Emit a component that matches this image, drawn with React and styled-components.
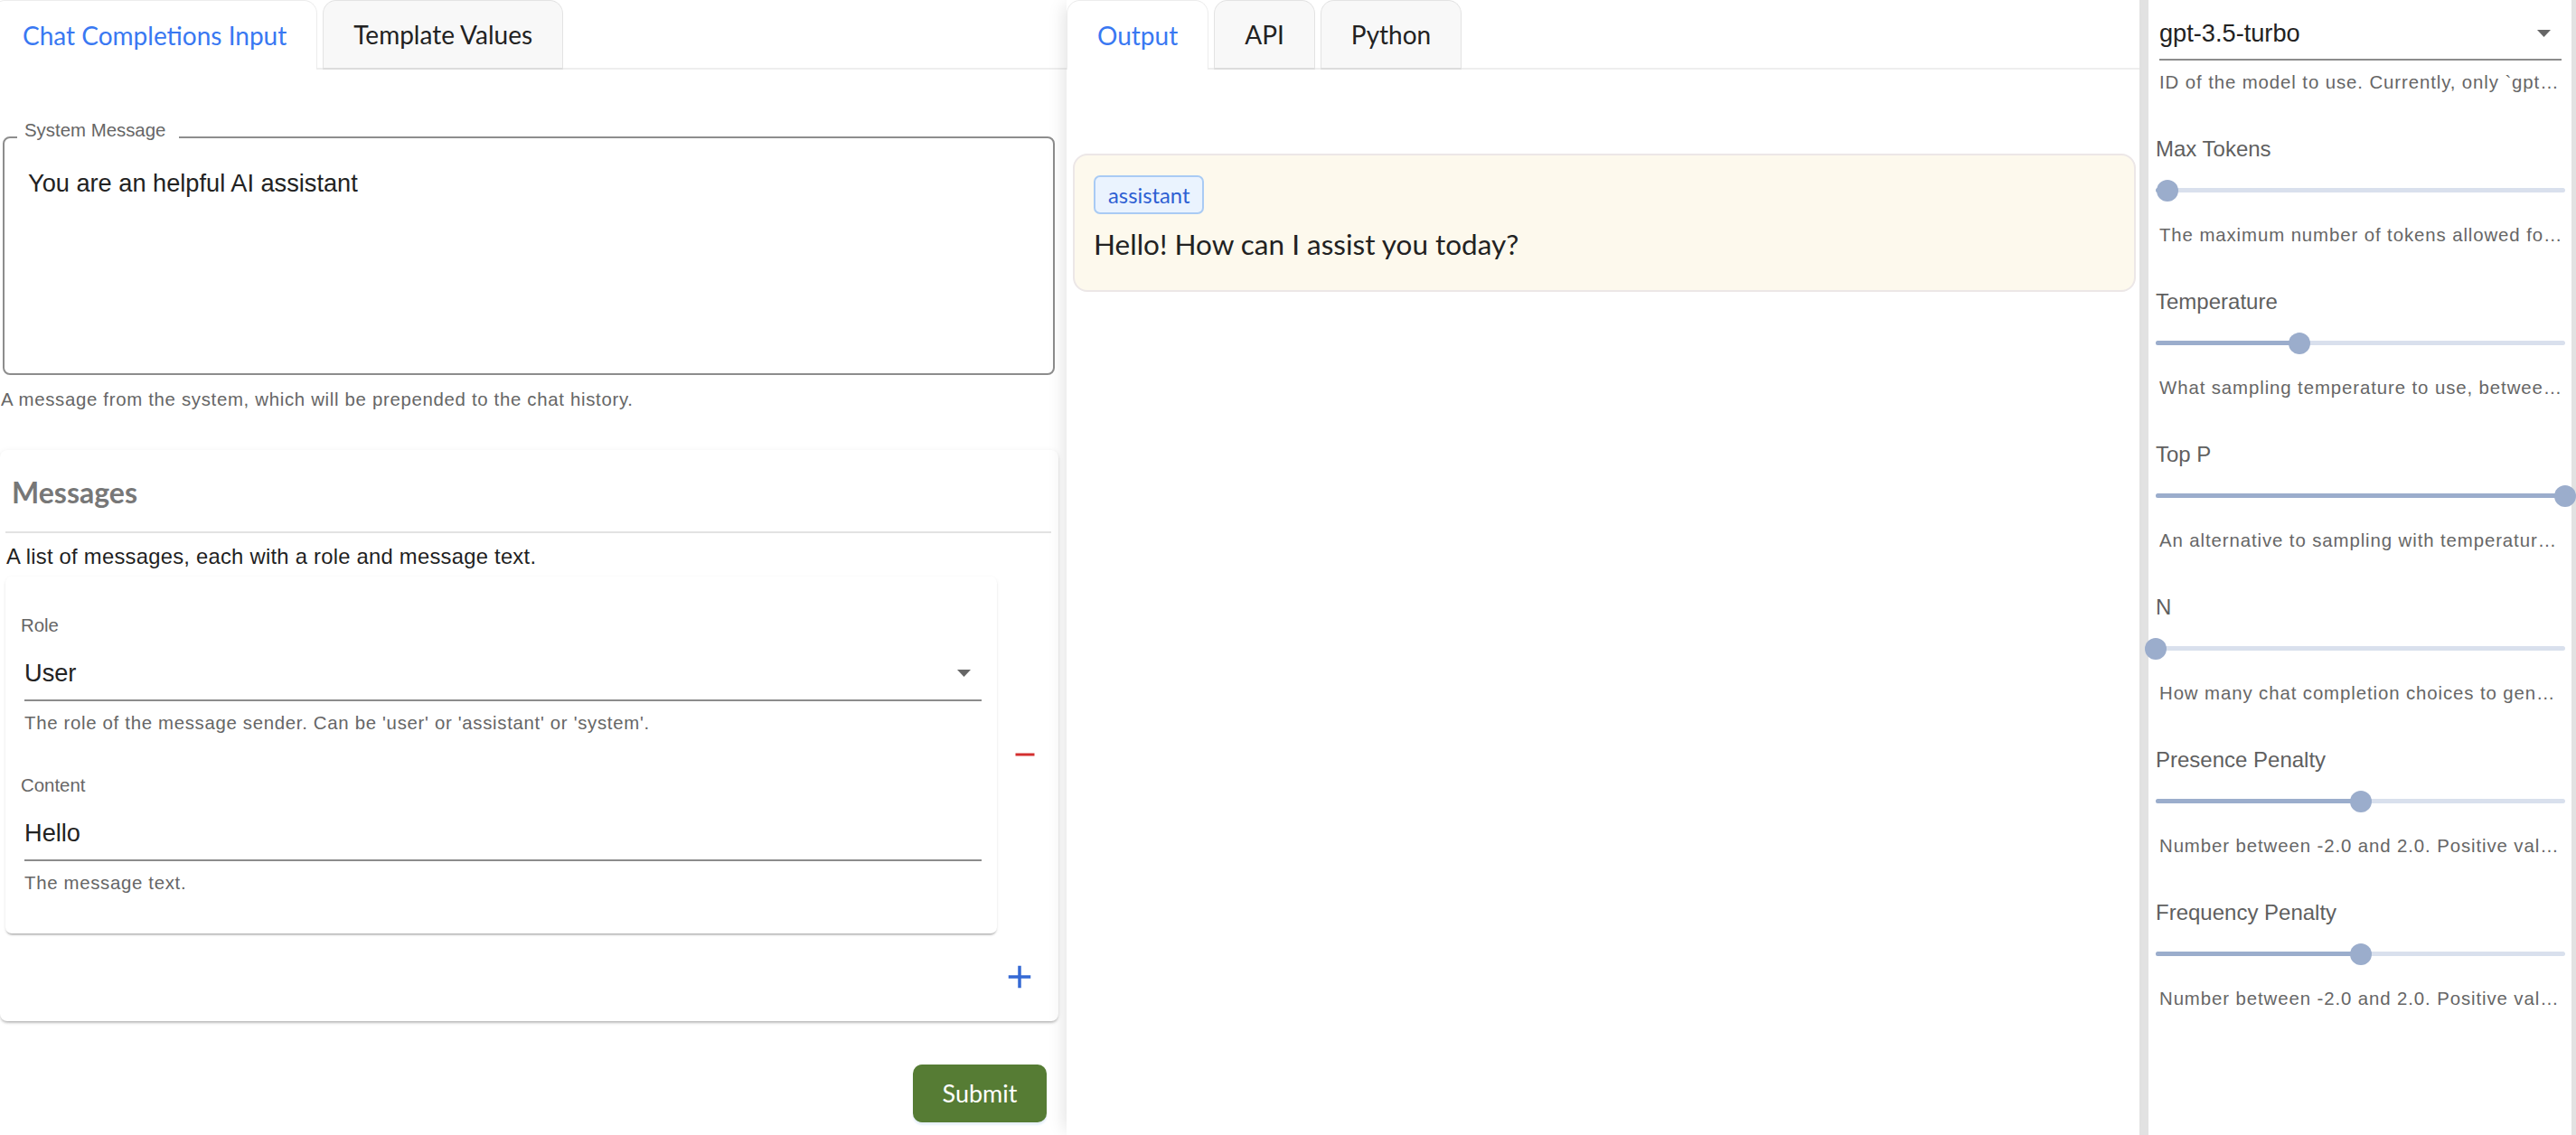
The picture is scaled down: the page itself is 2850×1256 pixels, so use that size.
import React from "react";
import styled, { createGlobalStyle } from "styled-components";

const GlobalStyle = createGlobalStyle`
  html, body {
    margin: 0;
    padding: 0;
    background: #fff;
  }
  body {
    font-family: "Liberation Sans", Arial, sans-serif;
    color: #222;
  }
  * {
    box-sizing: border-box;
  }
`;

const Page = styled.div`
  display: flex;
  width: 2850px;
  height: 1256px;
  overflow: hidden;
  background: #fff;
`;

const LeftPanel = styled.section`
  width: 1180px;
  flex-shrink: 0;
  display: flex;
  flex-direction: column;
`;

const LeftBody = styled.div`
  display: flex;
  flex-direction: column;
  padding-right: 9px;
`;

const MiddlePanel = styled.section`
  flex: 1;
  display: flex;
  flex-direction: column;
  position: relative;
  z-index: 1;
  background: #fff;
  box-shadow: -8px 0 18px -6px rgba(0, 0, 0, 0.12);
`;

const SidePanel = styled.aside`
  width: 483px;
  flex-shrink: 0;
  display: flex;
  flex-direction: column;
  padding: 0 7px 0 8px;
  border-left: 10px solid #e2e2e2;
  border-right: 5px solid #e2e2e2;
`;

const TabList = styled.div`
  display: flex;
  gap: 6px;
  height: 77px;
  flex-shrink: 0;
  margin-left: ${(p) => p.$offset || 0}px;
  box-shadow: inset 0 -2px 0 #eeeeee;
`;

const Tab = styled.div`
  display: flex;
  align-items: center;
  padding: 0 33px;
  font-family: Lato, "Liberation Sans", sans-serif;
  font-size: 28px;
  color: ${(p) => (p.$active ? "#3978f2" : "#222")};
  background: ${(p) => (p.$active ? "#fff" : "#f8f8f8")};
  border: 1.5px solid ${(p) => (p.$active ? "#ececec" : "#e3e3e3")};
  border-bottom: ${(p) => (p.$active ? "none" : "2px solid #dcdcdc")};
  border-radius: 15px 15px 0 0;
`;

const OutlinedBox = styled.div`
  position: relative;
  height: 264px;
  margin: 74px 4px 0 3px;
  padding: 34px 26px 0;
  border: 2px solid #8d8d8d;
  border-radius: 8px;
  font-size: 27.2px;
  line-height: 32.6px;
  color: #222;
`;

const FloatingLabel = styled.span`
  position: absolute;
  left: 14px;
  top: -19px;
  padding: 0 15px 0 8px;
  background: #fff;
  font-size: 20.4px;
  line-height: 20px;
  color: #666;
`;

const Helper = styled.div`
  margin-top: ${(p) => p.$top ?? 12}px;
  margin-left: ${(p) => p.$left ?? 0}px;
  font-size: 20.4px;
  line-height: 24.5px;
  letter-spacing: ${(p) => (p.$wide ? "0.9px" : "0.68px")};
  color: #666;
  white-space: nowrap;
  overflow: hidden;
  text-overflow: ellipsis;
`;

const Card = styled.div`
  display: flex;
  flex-direction: column;
  margin-top: 44px;
  padding: 29px 6px 0;
  border-radius: 8px;
  background: #fff;
  box-shadow: 0 3px 3px -2px rgba(0, 0, 0, 0.2), 0 2px 3px rgba(0, 0, 0, 0.12),
    0 1px 6px rgba(0, 0, 0, 0.06);
`;

const CardTitle = styled.h2`
  margin: 0;
  padding-left: 7px;
  font-family: Lato, "Liberation Sans", sans-serif;
  font-size: 32px;
  line-height: 36.7px;
  font-weight: 700;
  color: #777;
`;

const Divider = styled.hr`
  margin: 24px 2px 0 0;
  height: 2px;
  border: none;
  background: #e2e2e2;
`;

const Description = styled.p`
  margin: 12.5px 0 0 1px;
  font-size: 23.8px;
  line-height: 28.6px;
  letter-spacing: 0.25px;
  color: #1f1f1f;
`;

const ItemRow = styled.div`
  display: flex;
  align-items: center;
  margin-top: 7px;
`;

const ItemCard = styled.div`
  flex: 1;
  display: flex;
  flex-direction: column;
  gap: 45.4px;
  padding: 42.7px 17px 43.7px 21px;
  border-radius: 7px;
  background: #fff;
  box-shadow: 0 3px 2px -2px rgba(0, 0, 0, 0.25), 0 2px 2px rgba(0, 0, 0, 0.1),
    0 1px 4px rgba(0, 0, 0, 0.05);
`;

const Field = styled.div`
  display: flex;
  flex-direction: column;
`;

const FieldLabel = styled.div`
  margin-left: ${(p) => p.$shift ?? -4}px;
  font-size: ${(p) => p.$size || 20.4}px;
  line-height: ${(p) => p.$line || 24.5}px;
  color: ${(p) => p.$color || "#666"};
`;

const UnderlineInput = styled.div`
  display: flex;
  align-items: center;
  justify-content: space-between;
  margin: ${(p) => p.$top ?? 24}px ${(p) => p.$side ?? 0}px 0;
  padding-bottom: ${(p) => p.$bottom ?? 12}px;
  border-bottom: 2px solid #8c8c8c;
  font-size: ${(p) => p.$size || 27.2}px;
  line-height: ${(p) => p.$line || 32.6}px;
  color: #222;
`;

const Arrow = styled.svg`
  width: 15px;
  height: 8px;
  margin-right: 12px;
  fill: #666;
`;

const IconColumn = styled.div`
  width: 62px;
  display: flex;
  justify-content: center;
`;

const IconButton = styled.button`
  display: flex;
  align-items: center;
  justify-content: center;
  padding: 0;
  border: none;
  background: none;
  color: ${(p) => p.$color};
  cursor: pointer;
`;

const AddRow = styled.div`
  height: 97px;
  display: flex;
  align-items: center;
  justify-content: flex-end;
  padding-right: 16px;
`;

const SubmitButton = styled.button`
  align-self: flex-end;
  width: 148px;
  height: 64px;
  margin: 48px 13px 0 0;
  border: none;
  border-radius: 10px;
  background: #567c34;
  color: #fff;
  font-family: Lato, "Liberation Sans", sans-serif;
  font-size: 27px;
  box-shadow: 0 3px 2px rgba(120, 170, 230, 0.18);
`;

const OutputBody = styled.div`
  padding: 93px 4px 0 7px;
`;

const MessageBox = styled.div`
  display: flex;
  flex-direction: column;
  align-items: flex-start;
  padding: 22px 22px 32.5px 21px;
  border: 2px solid #ece7e7;
  border-radius: 16px;
  background: #fdf9ed;
`;

const RoleBadge = styled.span`
  display: inline-flex;
  align-items: center;
  height: 43px;
  padding: 0 14px;
  border: 2px solid #a9cbf4;
  border-radius: 7px;
  background: #eaf3fe;
  color: #2d5fd3;
  font-family: Lato, "Liberation Sans", sans-serif;
  font-size: 23.8px;
`;

const MessageText = styled.div`
  margin-top: 15px;
  font-family: Lato, "Liberation Sans", sans-serif;
  font-size: 31.5px;
  line-height: 36.7px;
  color: #222;
`;

const ParamGroup = styled.div`
  display: flex;
  flex-direction: column;
  margin-top: 48px;
`;

const SliderTrack = styled.div`
  position: relative;
  height: 26px;
  margin-top: 18px;
`;

const Rail = styled.div`
  position: absolute;
  left: 0;
  right: 0;
  top: 10.5px;
  height: 5px;
  border-radius: 3px;
  background: #d9e0ed;
`;

const Fill = styled.div`
  position: absolute;
  left: 0;
  top: 10.5px;
  height: 5px;
  border-radius: 3px;
  background: #9badcc;
`;

const Thumb = styled.div`
  position: absolute;
  top: 1px;
  width: 24px;
  height: 24px;
  margin-left: -12px;
  border-radius: 50%;
  background: #9badcc;
`;

const DropArrow = () => (
  <Arrow viewBox="0 0 15 8">
    <polygon points="0,0 15,0 7.5,8" />
  </Arrow>
);

const Slider = ({ value }) => (
  <SliderTrack>
    <Rail />
    <Fill style={{ width: `${value}%` }} />
    <Thumb style={{ left: `${value}%` }} />
  </SliderTrack>
);

const params = [
  {
    label: "Max Tokens",
    value: 2.9,
    help: "The maximum number of tokens allowed for the generated answer. By default, the number of tokens the model can return will be (4096 - prompt tokens).",
  },
  {
    label: "Temperature",
    value: 35,
    help: "What sampling temperature to use, between 0 and 2. Higher values like 0.8 will make the output more random.",
  },
  {
    label: "Top P",
    value: 100,
    help: "An alternative to sampling with temperature, called nucleus sampling.",
  },
  {
    label: "N",
    value: 0,
    help: "How many chat completion choices to generate for each input message.",
  },
  {
    label: "Presence Penalty",
    value: 50,
    help: "Number between -2.0 and 2.0. Positive values penalize new tokens based on whether they appear in the text so far.",
  },
  {
    label: "Frequency Penalty",
    value: 50,
    help: "Number between -2.0 and 2.0. Positive values penalize new tokens based on their existing frequency in the text so far.",
  },
];

export default function App() {
  return (
    <>
      <GlobalStyle />
      <Page>
        <LeftPanel>
          <TabList $offset={-9}>
            <Tab $active>Chat Completions Input</Tab>
            <Tab>Template Values</Tab>
          </TabList>
          <LeftBody>
            <OutlinedBox>
              <FloatingLabel>System Message</FloatingLabel>
              You are an helpful AI assistant
            </OutlinedBox>
            <Helper $top={14.5} $left={1}>
              A message from the system, which will be prepended to the chat history.
            </Helper>

            <Card>
              <CardTitle>Messages</CardTitle>
              <Divider />
              <Description>A list of messages, each with a role and message text.</Description>
              <ItemRow>
                <ItemCard>
                  <Field>
                    <FieldLabel>Role</FieldLabel>
                    <UnderlineInput>
                      <span>User</span>
                      <DropArrow />
                    </UnderlineInput>
                    <Helper>
                      The role of the message sender. Can be 'user' or 'assistant' or 'system'.
                    </Helper>
                  </Field>
                  <Field>
                    <FieldLabel>Content</FieldLabel>
                    <UnderlineInput>
                      <span>Hello</span>
                    </UnderlineInput>
                    <Helper>The message text.</Helper>
                  </Field>
                </ItemCard>
                <IconColumn>
                  <IconButton $color="#d32f2f" aria-label="Remove message">
                    <svg width="36" height="36" viewBox="0 0 24 24" fill="currentColor">
                      <path d="M19 13H5v-2h14v2z" />
                    </svg>
                  </IconButton>
                </IconColumn>
              </ItemRow>
              <AddRow>
                <IconButton $color="#3569d4" aria-label="Add message">
                  <svg width="42" height="42" viewBox="0 0 24 24" fill="currentColor">
                    <path d="M19 13h-6v6h-2v-6H5v-2h6V5h2v6h6v2z" />
                  </svg>
                </IconButton>
              </AddRow>
            </Card>

            <SubmitButton>Submit</SubmitButton>
          </LeftBody>
        </LeftPanel>

        <MiddlePanel>
          <TabList>
            <Tab $active>Output</Tab>
            <Tab>API</Tab>
            <Tab>Python</Tab>
          </TabList>
          <OutputBody>
            <MessageBox>
              <RoleBadge>assistant</RoleBadge>
              <MessageText>Hello! How can I assist you today?</MessageText>
            </MessageBox>
          </OutputBody>
        </MiddlePanel>

        <SidePanel>
          <Field>
            <UnderlineInput $top={22} $side={4} $size={27.2} $line={30.6}>
              <span>gpt-3.5-turbo</span>
              <DropArrow />
            </UnderlineInput>
            <Helper $wide $left={4}>
              ID of the model to use. Currently, only `gpt-3.5-turbo` and `gpt-3.5-turbo-0301` are supported.
            </Helper>
          </Field>
          {params.map((p) => (
            <ParamGroup key={p.label}>
              <FieldLabel $shift={0} $size={24} $line={28.8} $color="#5f5f5f">
                {p.label}
              </FieldLabel>
              <Slider value={p.value} />
              <Helper $wide $top={23.7} $left={4}>
                {p.help}
              </Helper>
            </ParamGroup>
          ))}
        </SidePanel>
      </Page>
    </>
  );
}
